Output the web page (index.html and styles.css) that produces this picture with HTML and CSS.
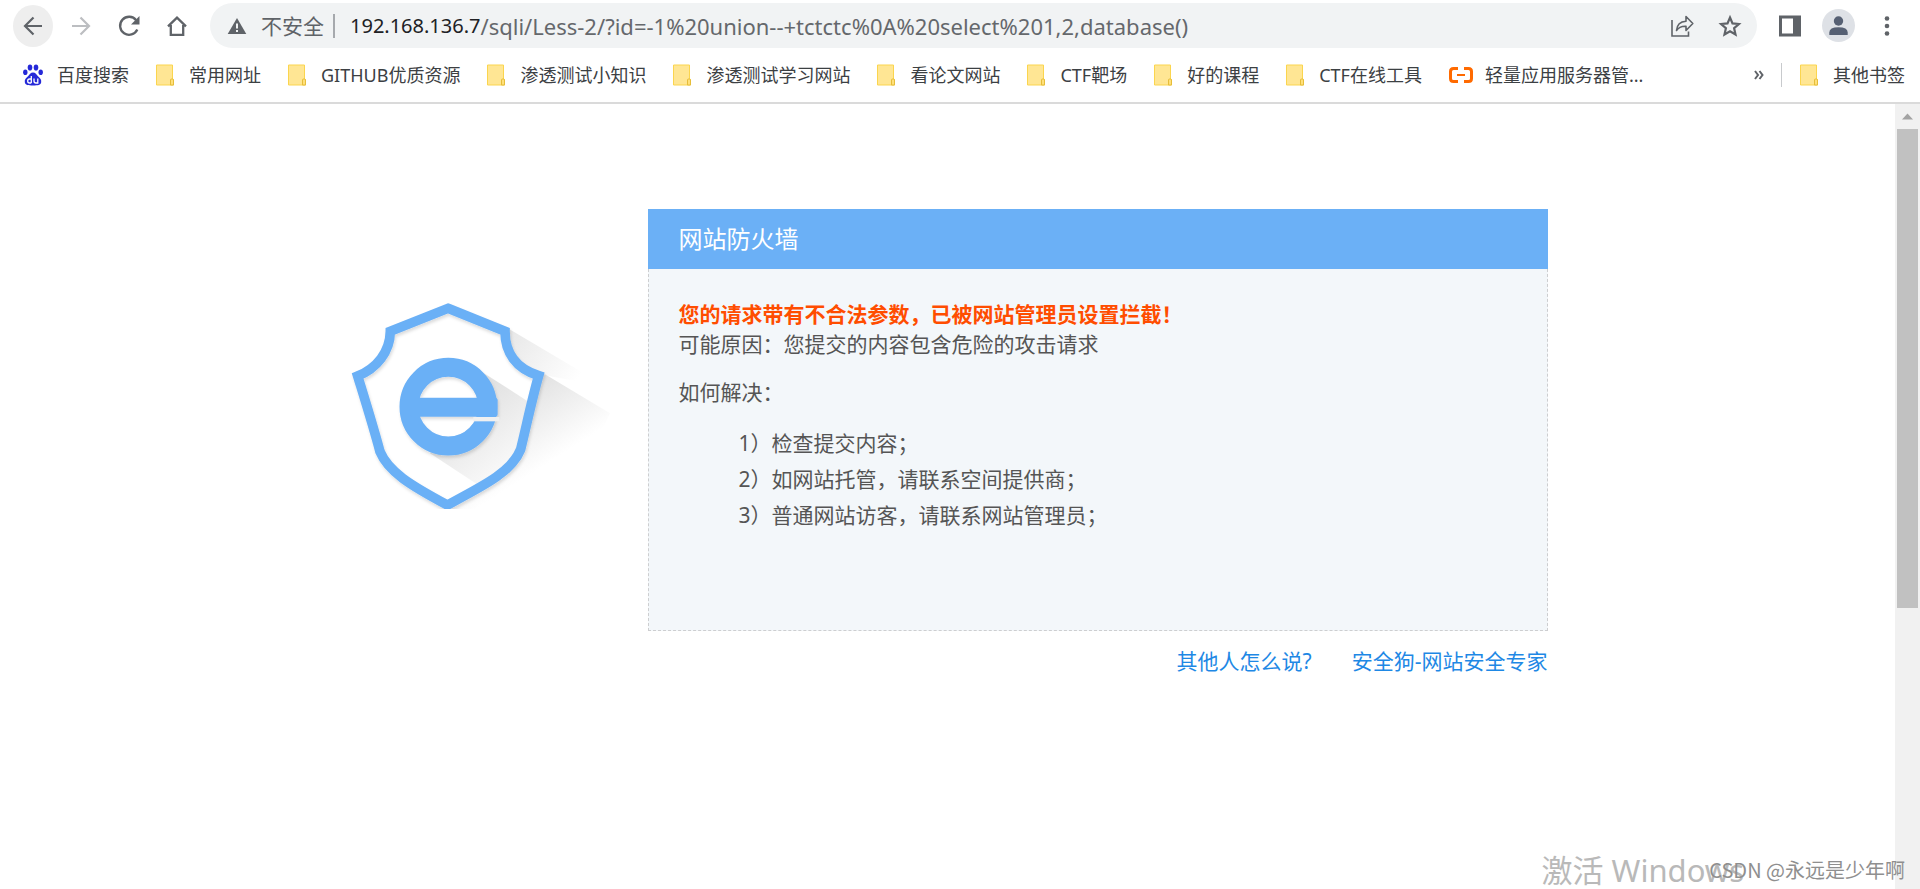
FILE: index.html
```html
<!DOCTYPE html>
<html lang="zh-CN">
<head>
<meta charset="utf-8">
<title>网站防火墙</title>
<link rel="stylesheet" href="styles.css">
</head>
<body>
<svg class="defs" aria-hidden="true">
  <symbol id="folder" viewBox="0 0 18 22">
    <path d="M.5 1h16v14.5h1V21H.5z" fill="#ffe694" stroke="#fbd54e"/>
    <path d="M14.500 21v-5q0-1 1-1h1q1 0 1 1v5z" fill="#ffe07a" stroke="#e6bd3a"/>
  </symbol>
</svg>

<header class="browser">
  <div class="toolbar">
    <div class="nav">
      <button class="nav-btn nav-back" aria-label="后退"><svg viewBox="0 0 24 24"><path d="M21 12H4M12.500 3.500 4 12l8.500 8.500" fill="none" stroke="#5f6368" stroke-width="2.200"/></svg></button>
      <button class="nav-btn" aria-label="前进"><svg viewBox="0 0 24 24"><path d="M3 12h17M11.500 3.500 20 12l-8.500 8.500" fill="none" stroke="#bcbec1" stroke-width="2.200"/></svg></button>
      <button class="nav-btn" aria-label="重新加载"><svg viewBox="0 0 24 24"><path d="M19.200 6.200A9 9 0 1 0 20.300 15.500" fill="none" stroke="#5f6368" stroke-width="2.300"/><path d="M22.500 2v8.500H14z" fill="#5f6368"/></svg></button>
      <button class="nav-btn" aria-label="主页"><svg viewBox="0 0 24 24"><path d="M3 12.300 12 3.600l9 8.700M5.800 11v9.800h12.400V11" fill="none" stroke="#5f6368" stroke-width="2.300"/></svg></button>
    </div>
    <div class="omnibox">
      <svg class="warn" viewBox="0 0 20 18"><path d="M10 1 19.300 17H.7z" fill="#5f6368"/><path d="M10 6.500v5M10 13v2" stroke="#f1f3f4" stroke-width="2"/></svg>
      <span class="insecure">不安全</span>
      <label class="host" for="url">192.168.136.7</label>
      <input class="url" id="url" type="text" value="/sqli/Less-2/?id=-1%20union--+tctctc%0A%20select%201,2,database()" spellcheck="false">
      <button class="icon-btn" aria-label="分享"><svg viewBox="0 0 24 24"><path d="M2 6v16h16.500V17.500" fill="none" stroke="#5f6368" stroke-width="1.600"/><path d="M6.500 16.500C7 10.500 10.500 7.500 16 7.200V2.500l6.800 7-6.800 7v-4.300c-4.500-.2-7.500 1-9.500 4.300z" fill="none" stroke="#5f6368" stroke-width="1.600" stroke-linejoin="round"/></svg></button>
      <button class="icon-btn" aria-label="为此页添加书签"><svg viewBox="0 0 24 24"><path d="m12 3.500 2.500 5.900 6.400.6-4.800 4.200 1.400 6.300L12 17.200l-5.500 3.300 1.400-6.300L3.100 10l6.400-.6z" fill="none" stroke="#5f6368" stroke-width="2.200"/></svg></button>
    </div>
    <div class="tools">
      <button class="icon-btn" aria-label="侧边栏"><svg viewBox="0 0 24 24"><path d="M1 1.500h22v21H1zM4 4.500v15h11v-15z" fill="#5f6368" fill-rule="evenodd"/></svg></button>
      <button class="avatar" aria-label="个人资料"><svg viewBox="0 0 33 33"><circle cx="16.500" cy="16.500" r="16.500" fill="#dee1e6"/><circle cx="16.500" cy="12" r="4.700" fill="#566073"/><path d="M7.300 26v-2.500q0-5.200 9.200-5.200t9.200 5.200V26z" fill="#566073"/></svg></button>
      <button class="icon-btn" aria-label="菜单"><svg viewBox="0 0 24 24" fill="#5f6368"><circle cx="12" cy="4.500" r="2.300"/><circle cx="12" cy="12" r="2.300"/><circle cx="12" cy="19.500" r="2.300"/></svg></button>
    </div>
  </div>

  <nav class="bookmarks">
    <a class="bookmark" href="#"><svg class="paw" viewBox="0 0 20 22" fill="#2529d8"><ellipse cx="2.300" cy="8.300" rx="2.200" ry="2.800"/><ellipse cx="7" cy="3.500" rx="2.300" ry="3.100"/><ellipse cx="13" cy="3.500" rx="2.300" ry="3.100"/><ellipse cx="17.700" cy="8.300" rx="2.200" ry="2.800"/><path d="M10 8.500c2.500 0 3.500 2 5 3.800 1.700 1.700 3.700 3.200 3.200 5.900-.5 3-3.200 3.200-8.200 3.200s-7.700-.2-8.200-3.200c-.5-2.700 1.500-4.200 3.200-5.900 1.500-1.800 2.500-3.800 5-3.800z"/><path d="M8.300 12v7M8.300 15H6.500q-1.800 0-1.800 2t1.800 2h1.800M11 14.500V17q0 2 2 2h1.800v-4.500" fill="none" stroke="#fff" stroke-width="1.300"/></svg>百度搜索</a>
    <a class="bookmark" href="#"><svg class="folder"><use href="#folder"/></svg>常用网址</a>
    <a class="bookmark" href="#"><svg class="folder"><use href="#folder"/></svg>GITHUB优质资源</a>
    <a class="bookmark" href="#"><svg class="folder"><use href="#folder"/></svg>渗透测试小知识</a>
    <a class="bookmark" href="#"><svg class="folder"><use href="#folder"/></svg>渗透测试学习网站</a>
    <a class="bookmark" href="#"><svg class="folder"><use href="#folder"/></svg>看论文网站</a>
    <a class="bookmark" href="#"><svg class="folder"><use href="#folder"/></svg>CTF靶场</a>
    <a class="bookmark" href="#"><svg class="folder"><use href="#folder"/></svg>好的课程</a>
    <a class="bookmark" href="#"><svg class="folder"><use href="#folder"/></svg>CTF在线工具</a>
    <a class="bookmark" href="#"><svg class="cloud" viewBox="0 0 24 16"><path d="M9 1.500H4.500Q1.500 1.500 1.500 4.500v7q0 3 3 3H9M15 1.500h4.500q3 0 3 3v7q0 3-3 3H15" fill="none" stroke="#ff6a00" stroke-width="3"/><path d="M8 8h8" stroke="#ff6a00" stroke-width="2"/></svg>轻量应用服务器管...</a>
    <button class="more" aria-label="更多书签"><svg viewBox="0 0 10 10"><path d="m1 1 3 4-3 4M5.500 1l3 4-3 4" fill="none" stroke="#5f6368" stroke-width="2"/></svg></button>
    <a class="bookmark other" href="#"><svg class="folder"><use href="#folder"/></svg>其他书签</a>
  </nav>
</header>

<div class="viewport">
  <main class="page">
    <div class="firewall">
      <svg class="shield" viewBox="54 69 900 618" role="img" aria-label="安全狗">
        <defs>
          <linearGradient id="cast" gradientUnits="userSpaceOnUse" x1="560" y1="300" x2="700" y2="520">
            <stop offset="0" stop-color="#dedede"/><stop offset="1" stop-color="#fff"/>
          </linearGradient>
          <linearGradient id="cast-top" gradientUnits="userSpaceOnUse" x1="540" y1="160" x2="740" y2="300">
            <stop offset="0" stop-color="#e8e8e8"/><stop offset="1" stop-color="#fff"/>
          </linearGradient>
          <linearGradient id="cast-inner" gradientUnits="userSpaceOnUse" x1="400" y1="380" x2="540" y2="560">
            <stop offset="0" stop-color="#e2e2e2"/><stop offset="1" stop-color="#f9f9f9"/>
          </linearGradient>
          <filter id="soft" x="-25%" y="-25%" width="150%" height="150%">
            <feDropShadow dx="3" dy="7" stdDeviation="5" flood-color="#000" flood-opacity=".14"/>
          </filter>
        </defs>
        <path d="M536 146 830 320 640 285 550 240z" fill="url(#cast-top)"/>
        <path d="M640 280 840 400 700 687H352l200-130z" fill="url(#cast)"/>
        <path d="M354 85 523 154C523 218 558 266 624 287L568 508C545 575 465 615 352 675 240 615 175 575 150 515L83 288C140 270 180 216 181 154z" fill="#fff"/>
        <path d="M455 275 600 368 568 508C550 550 500 590 440 612L300 520z" fill="url(#cast-inner)"/>
        <path d="M354 85 525 154C525 218 558 266 626 287 604 365 590 435 572 508 545 575 465 615 352 675 240 615 175 575 150 515 130 440 105 360 83 288 140 265 180 216 181 154z" fill="none" stroke="#6bb0f6" stroke-width="29" filter="url(#soft)"/>
        <circle cx="355" cy="380" r="90" fill="#fff"/>
        <g filter="url(#soft)">
          <circle cx="355" cy="380" r="118" fill="none" stroke="#6bb0f6" stroke-width="57"/>
          <rect x="240" y="353" width="263" height="57" rx="8" fill="#6bb0f6"/>
        </g>
        <rect x="430" y="411" width="78" height="13" fill="#f0f0f0"/>
      </svg>
      <section class="notice">
        <h1 class="notice-title">网站防火墙</h1>
        <div class="notice-body">
          <p class="alert">您的请求带有不合法参数，已被网站管理员设置拦截！</p>
          <p class="line">可能原因：您提交的内容包含危险的攻击请求</p>
          <p class="line how">如何解决：</p>
          <ul class="steps">
            <li>1）检查提交内容；</li>
            <li>2）如网站托管，请联系空间提供商；</li>
            <li>3）普通网站访客，请联系网站管理员；</li>
          </ul>
        </div>
        <div class="links">
          <a href="#">其他人怎么说?</a>
          <a href="#">安全狗-网站安全专家</a>
        </div>
      </section>
    </div>
  </main>
  <div class="scrollbar">
    <svg class="arrow" viewBox="0 0 25 25"><path d="m7 15.500 5.500-6 5.500 6z" fill="#a3a3a3"/></svg>
    <div class="thumb"></div>
  </div>
  <div class="activate">激活 Windows</div>
  <div class="credit">CSDN @永远是少年啊</div>
</div>
</body>
</html>
```
FILE: styles.css
```css
* { box-sizing: border-box; }

body {
  margin: 0;
  min-height: 100vh;
  display: flex;
  flex-direction: column;
  background: #fff;
  font-family: "Noto Sans", "Noto Sans CJK SC", sans-serif;
}

h1, p, ul { margin: 0; padding: 0; }
a { text-decoration: none; }
svg { display: block; flex: none; }

button {
  display: flex;
  align-items: center;
  justify-content: center;
  flex: none;
  padding: 0;
  border: 0;
  background: none;
}

.defs { position: absolute; width: 0; height: 0; }

/* Browser chrome */
.browser { border-bottom: 2px solid #dadada; }

.toolbar {
  display: flex;
  align-items: center;
  padding: 3px 21px 3px 13px;
}

.nav { display: flex; gap: 8px; margin-right: 13px; }
.nav-btn { width: 40px; height: 42px; border-radius: 50%; }
.nav-btn svg { width: 24px; height: 24px; }
.nav-back { background: #eeeeee; }

.omnibox {
  flex: 1;
  display: flex;
  align-items: center;
  height: 45px;
  padding: 0 15px 0 17px;
  border-radius: 23px;
  background: #f1f3f4;
  font-size: 20px;
  line-height: 28px;
}

.warn { width: 20px; height: 18px; margin-right: 14px; }

.insecure {
  padding-right: 9px;
  border-right: 2px solid #a6a9ad;
  color: #5f6368;
  font-size: 21px;
  line-height: 24px;
}

.host { margin-left: 15px; color: #202124; }

.url {
  flex: 1;
  min-width: 0;
  padding: 0;
  border: 0;
  outline: 0;
  background: none;
  color: #65686c;
  font: inherit;
  font-size: 22px;
}

.icon-btn { width: 24px; height: 24px; }
.icon-btn svg { width: 24px; height: 24px; }
.omnibox .icon-btn { margin-left: 24px; }

.tools { display: flex; align-items: center; gap: 20px; margin-left: 21px; }
.avatar, .avatar svg { width: 33px; height: 33px; }

.bookmarks {
  display: flex;
  align-items: center;
  height: 51px;
  padding: 0 15px 4px 23px;
}

.bookmark {
  display: flex;
  align-items: center;
  margin-right: 27px;
  color: #3c4043;
  font-size: 18px;
  line-height: 26px;
  white-space: nowrap;
}

.folder { width: 18px; height: 22px; margin-right: 15px; }
.paw { width: 20px; height: 22px; margin-right: 14px; }
.cloud { width: 24px; height: 16px; margin-right: 12px; }

.more { width: 10px; height: 24px; margin-left: auto; margin-right: 17px; }
.more svg { width: 10px; height: 10px; }

.other { margin-right: 0; }
.other::before {
  content: "";
  width: 1px;
  height: 24px;
  margin-right: 18px;
  background: #c8cacd;
}

/* Page */
.viewport {
  position: relative;
  flex: 1;
  display: flex;
  overflow: hidden;
}

.page { flex: 1; padding: 105px 20px 40px; }

.firewall {
  display: grid;
  grid-template-columns: 300px 1fr;
  max-width: 1200px;
  margin: 0 auto;
}

.shield { width: 300px; height: 206px; margin-top: 94px; }

.notice-title {
  padding: 0 31px;
  background: #6bb0f6;
  color: #fff;
  font-size: 24px;
  font-weight: 400;
  line-height: 60px;
}

.notice-body {
  min-height: 362px;
  padding: 30px 30px 96px;
  border: 1px dashed #cdced0;
  border-top: 0;
  background: #f3f7fa;
  color: #555;
  font-size: 21px;
  line-height: 30px;
}

.alert { color: #ff4d00; font-weight: 700; }
.how { margin-top: 18px; }

.steps {
  margin-top: 18px;
  padding-left: 60px;
  list-style: none;
  line-height: 36px;
}

.links {
  display: flex;
  justify-content: flex-end;
  gap: 40px;
  margin-top: 15px;
  font-size: 21px;
  line-height: 30px;
}

.links a { color: #1e88e5; }

.scrollbar { width: 25px; background: #f1f1f1; }
.arrow { width: 25px; height: 25px; }
.thumb { height: 61%; margin: 0 2px; background: #c1c1c1; }

.activate {
  position: absolute;
  right: 176px;
  bottom: 0;
  color: #b9b9b9;
  font-size: 31px;
  line-height: 38px;
}

.credit {
  position: absolute;
  right: 15px;
  bottom: 4px;
  color: #8f8f8f;
  font-family: "Noto Sans CJK SC", sans-serif;
  font-size: 20px;
  line-height: 30px;
}
```
